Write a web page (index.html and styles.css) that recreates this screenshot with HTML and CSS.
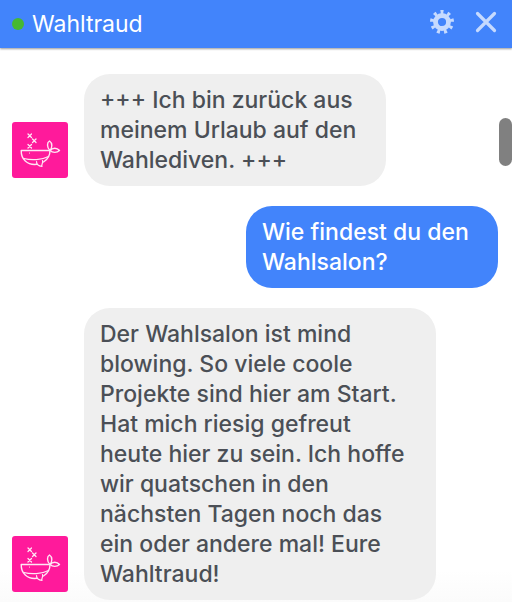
FILE: index.html
```html
<!DOCTYPE html>
<html lang="de">
<head>
<meta charset="utf-8">
<meta name="viewport" content="width=device-width, initial-scale=1">
<title>Wahltraud</title>
<link rel="stylesheet" href="styles.css">
</head>
<body>
<svg class="defs" aria-hidden="true">
  <symbol id="whale" viewBox="0 0 56 56">
    <g fill="none" stroke="#ffe6f4" stroke-linecap="round" stroke-linejoin="round">
      <path stroke-width="1.3" d="M16 12l3.500 3.500M19.500 12l-3.500 3.500M20.500 17l3.500 3.500M24 17l-3.500 3.500M16 22.500l3.500 3.500M19.500 22.500l-3.500 3.500"/>
      <path stroke-width="1.4" d="M9.200 28.500H38C38 33 35.500 37.500 31.500 40M25 42.300C15 43.500 9 37 9.200 28.500"/>
      <path stroke-width="1.2" d="M12 36.500C19 38.500 30 38 36.500 34.500M24.500 39.500C24.500 42 26.500 44 30 44.500C29 42.500 31.500 41 30.500 38.500"/>
      <path stroke-width="1.4" d="M38 28.500C34.500 25 35 20.500 37.500 19C40.500 21 40.500 25.500 38 28.500C40.500 25.500 45 25.500 47.500 28.500C45 31 40.500 31 38 28.500Z"/>
    </g>
    <circle cx="17.500" cy="31" r=".6" fill="#fff"/>
  </symbol>
</svg>
<header class="bar">
  <span class="status"></span>
  <h1 class="name">Wahltraud</h1>
  <button class="icon-button" type="button" aria-label="Einstellungen">
    <svg viewBox="0 0 24 24" width="24" height="24" fill="none" stroke="currentColor">
      <circle cx="12" cy="12" r="6.500" stroke-width="4.800"/>
      <circle cx="12" cy="12" r="10" stroke-width="4" pathLength="90" stroke-dasharray="4.200 5.800" stroke-dashoffset="2.100" transform="rotate(-90 12 12)"/>
    </svg>
  </button>
  <button class="icon-button" type="button" aria-label="Schließen">
    <svg viewBox="0 0 24 24" width="24" height="24" fill="none" stroke="currentColor" stroke-width="3.200" stroke-linecap="round"><path d="M3.500 3.500l17 17M20.500 3.500l-17 17"/></svg>
  </button>
</header>
<main class="chat">
  <article class="message">
    <svg class="avatar" role="img" aria-label="Wahltraud"><use href="#whale"/></svg>
    <p class="bubble short">+++ Ich bin zurück aus meinem Urlaub auf den Wahlediven. +++</p>
  </article>
  <article class="message own">
    <p class="bubble question">Wie findest du den Wahlsalon?</p>
  </article>
  <article class="message">
    <svg class="avatar" role="img" aria-label="Wahltraud"><use href="#whale"/></svg>
    <p class="bubble long">Der Wahlsalon ist mind blowing. So viele coole Projekte sind hier am Start. Hat mich riesig gefreut heute hier zu sein. Ich hoffe wir quatschen in den nächsten Tagen noch das ein oder andere mal! Eure Wahltraud!</p>
  </article>
  <span class="thumb"></span>
</main>
</body>
</html>
```
FILE: styles.css
```css
* {
  box-sizing: border-box;
}

body {
  margin: 0;
  background: #fff;
  color: #4b4f56;
  font-family: Inter, "Liberation Sans", sans-serif;
  font-size: 23px;
  font-weight: 500;
  line-height: 30px;
}

.defs {
  position: absolute;
  width: 0;
  height: 0;
}

.bar {
  position: relative;
  z-index: 1;
  display: flex;
  align-items: center;
  gap: 8px;
  height: 48px;
  padding: 0 14px 4px 12px;
  background: #4284fb;
  box-shadow: 0 1px 2px rgba(0, 0, 0, 0.4);
  color: #fff;
}

.status {
  width: 12px;
  height: 12px;
  margin-top: 4px;
  border-radius: 50%;
  background: #46b832;
}

.name {
  flex: 1;
  margin: 4px 0 0;
  font-size: 23px;
  font-weight: 400;
}

.icon-button {
  display: flex;
  margin: 0 0 0 12px;
  padding: 0;
  border: 0;
  background: none;
  color: #c6dafe;
}

.chat {
  position: relative;
  display: flex;
  flex-direction: column;
  gap: 20px;
  padding: 26px 14px 2px 12px;
  background: linear-gradient(to top, #fbfbfb, #fff 32px);
}

.message {
  display: flex;
  align-items: flex-end;
  gap: 16px;
}

.own {
  justify-content: flex-end;
}

.avatar {
  flex: none;
  width: 56px;
  height: 56px;
  margin-bottom: 8px;
  border-radius: 3px;
  background: #ff1a9b;
}

.bubble {
  margin: 0;
  padding: 11px 24px 11px 16px;
  border-radius: 26px;
  background: #efefef;
}

.short {
  max-width: 302px;
}

.long {
  max-width: 352px;
}

.question {
  max-width: 252px;
}

.own .bubble {
  background: #4284fb;
  color: #fff;
}

.thumb {
  position: absolute;
  top: 70px;
  right: 0;
  width: 13px;
  height: 48px;
  border-radius: 7px;
  background: #808080;
}
```
